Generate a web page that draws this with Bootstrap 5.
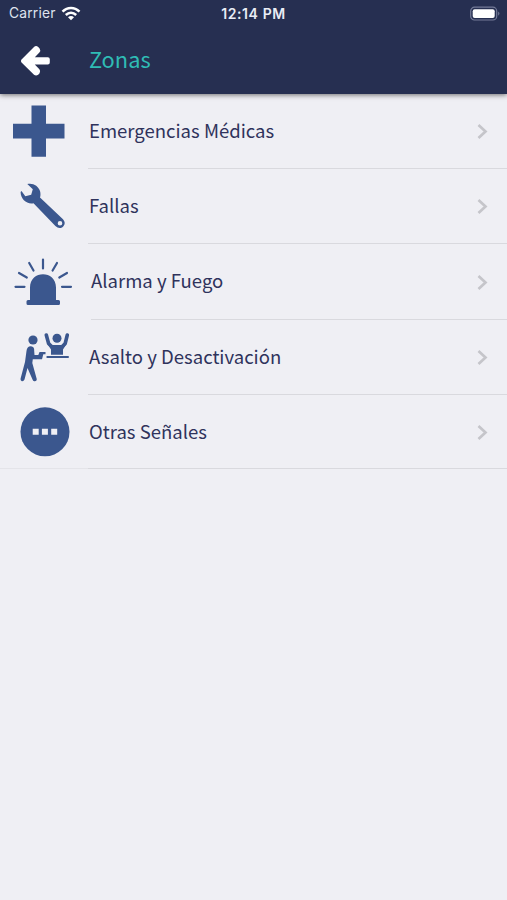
<!DOCTYPE html>
<html lang="es">
<head>
<meta charset="utf-8">
<meta name="viewport" content="width=device-width, initial-scale=1">
<title>Zonas</title>
<link href="https://cdn.jsdelivr.net/npm/bootstrap@5.3.0/dist/css/bootstrap.min.css" rel="stylesheet">
<style>
body{background:#efeff4;font-family:"Noto Sans CJK SC","Noto Sans",sans-serif;color:#2f335c}
.app-header{background:#262f51;height:94px;box-shadow:0 1px 5px rgba(0,0,0,.55);z-index:2}
.status{height:27px;font-family:Inter,"Liberation Sans",sans-serif;font-size:13.8px;line-height:27px;color:#dfe3ef}
.status .side{flex:1 1 0}
.carrier{padding-left:9px;letter-spacing:.2px}
.wifi{margin-left:5px}
.clock{font-weight:600;font-size:14px;letter-spacing:.6px;color:#e9ecf5;padding-left:4px}
.title-bar{height:67px}
.back{width:89px;height:67px}
.title-bar h1{font-size:21.8px;line-height:64px;font-weight:400;color:#2fbcb5;padding-bottom:3px}
.zone{height:75px;color:inherit}
.zone.tall{height:76px}
.zone.last{height:74px;box-shadow:inset 0 -1px #e4e4e9}
.zone svg.pic{width:88px;height:75px;fill:#3b578e;stroke:#3b578e;stroke-width:0}
.zone .body-part{border-bottom:1px solid #d9d9de;padding-right:18px}
.zone.tall .body-part{margin-left:3px}
.label{font-size:18.55px;line-height:30px;white-space:nowrap;padding:0 0 3px 1px}
.zone.last .label{padding-bottom:2px}
.zone.tall .label{padding-left:0}
.chev{width:12px;height:18px;fill:none;stroke:#c5c5ca;stroke-width:2.7}
</style>
</head>
<body>
<header class="app-header position-relative">
  <div class="status d-flex">
    <div class="side d-flex align-items-center">
      <span class="carrier">Carrier</span>
      <svg class="wifi" width="20" height="16" viewBox="0 0 20 16" fill="none" stroke="#fff" stroke-width="2.5"><path d="M1.500 5.700C6.500 .7 13.500 .7 18.500 5.700M4.800 9C8 6 12 6 15.200 9"/><path d="M10 14.300L7 11.300C8.800 9.600 11.200 9.600 13 11.300Z" fill="#fff" stroke="none"/></svg>
    </div>
    <span class="clock">12:14 PM</span>
    <div class="side d-flex align-items-center justify-content-end pe-1">
      <svg width="33" height="16" viewBox="0 0 33 16"><rect x=".7" y="1.200" width="26" height="12.800" rx="3.800" fill="none" stroke="#747b98" stroke-width="1.200"/><rect x="2.700" y="3.200" width="22" height="8.800" rx="2" fill="#fff"/><path d="M28.300 5.500Q30.500 7.500 28.300 9.700Z" fill="#858ba5"/></svg>
    </div>
  </div>
  <div class="title-bar d-flex align-items-center">
    <svg class="back" viewBox="0 27 89 67" fill="#fff"><path d="M21.300 62.300Q20.600 61 21.300 59.700L34 46.900Q36 45.200 38.200 46.900L39.600 48.400Q41 50.500 39.400 52.500L34.800 57.200H47.800Q49.800 57.200 49.800 59.200V62.600Q49.800 64.600 47.800 64.600H34.800L39.400 69.200Q41 71.300 39.600 73.300L38.200 74.800Q36 76.400 34 74.800Z"/></svg>
    <h1 class="m-0">Zonas</h1>
  </div>
</header>

<main class="d-flex flex-column">
  <a class="zone d-flex text-decoration-none" href="#">
    <svg class="pic flex-shrink-0" viewBox="0 -1 88 75"><path d="M31.500 10.500H46V28.800H64.500V43.500H46V61.800H31.500V43.500H13V28.800H31.500Z"/></svg>
    <div class="body-part d-flex flex-grow-1 align-items-center justify-content-between"><span class="label">Emergencias Médicas</span><svg class="chev" viewBox="0 0 12 18"><path d="M1.500 3L8.500 9.500L1.500 16"/></svg></div>
  </a>
  <a class="zone d-flex text-decoration-none" href="#">
    <svg class="pic flex-shrink-0" viewBox="0 -1 88 75"><path fill-rule="evenodd" d="M27.300 14C33 12.600 38.500 16 40 21C40.700 23.500 40.600 26 40 27.500L63 49.200C65.300 51.700 65.300 54.300 63.200 56.400C61 58.500 58 58.500 55.400 56L33.500 33.200C27 34.500 20.700 29.500 20.600 22L21.500 21L25.300 26.300L31.200 24.800L32.800 19.300ZM60 50.900A2.300 2.300 0 1 0 60 55.500A2.300 2.300 0 1 0 60 50.900Z"/></svg>
    <div class="body-part d-flex flex-grow-1 align-items-center justify-content-between"><span class="label">Fallas</span><svg class="chev" viewBox="0 0 12 18"><path d="M1.500 3L8.500 9.500L1.500 16"/></svg></div>
  </a>
  <a class="zone tall d-flex text-decoration-none" href="#">
    <svg class="pic flex-shrink-0" viewBox="0 -1 88 75"><path d="M30 55V42.500C30 24.800 56 24.800 56 42.500V55H58.500Q60 55 60 56.500V58.500Q60 60 58.500 60H28Q26.500 60 26.500 58.500V56.500Q26.500 55 28 55Z"/><path fill="none" stroke-width="2.200" stroke-linecap="round" d="M15.500 41.800H24.500M19 28L26.800 32.500M29.200 18L33.500 25.500M43 14.500V23.500M57 18L52.600 25.500M67 28L59.300 32.500M62 41.800H71"/></svg>
    <div class="body-part d-flex flex-grow-1 align-items-center justify-content-between"><span class="label">Alarma y Fuego</span><svg class="chev" viewBox="0 0 12 18"><path d="M1.500 3L8.500 9.500L1.500 16"/></svg></div>
  </a>
  <a class="zone d-flex text-decoration-none" href="#">
    <svg class="pic flex-shrink-0" viewBox="0 0 88 75"><circle cx="33" cy="20" r="4.600"/><circle cx="57" cy="18.300" r="4.500"/><path d="M26.500 31Q27 26 31 26.200Q34.500 26.500 34.200 31L34.500 35H38.300L39.500 32H45.500V34.200H43.300L42 39.200H32.800L32.300 43L36.800 59.200Q36.700 61.700 34.300 61.300Q33 61 32.500 59.500L27.500 48L24.500 59.500Q23.500 61.700 21.500 61Q20.200 60.200 20.600 58.500L25 42Z"/><path fill="none" stroke-width="3.600" stroke-linecap="round" stroke-linejoin="round" d="M46.300 15L48.600 23.500L53 28M67.300 15L65.200 23.500L61 28"/><path d="M48 24.500L53 25H61L66 24.500L63 29.500V34.800H51V29.500ZM46.800 36H68.500Q69.500 37 68.500 38H46.800Q45.800 37 46.800 36Z"/></svg>
    <div class="body-part d-flex flex-grow-1 align-items-center justify-content-between"><span class="label">Asalto y Desactivación</span><svg class="chev" viewBox="0 0 12 18"><path d="M1.500 3L8.500 9.500L1.500 16"/></svg></div>
  </a>
  <a class="zone last d-flex text-decoration-none" href="#">
    <svg class="pic flex-shrink-0" viewBox="0 0 88 75"><circle cx="45" cy="36.800" r="24.500"/><path fill="#efeff4" d="M32.700 33.800h6v6h-6zM41.900 33.800h6v6h-6zM51.200 33.800h6v6h-6z"/></svg>
    <div class="body-part d-flex flex-grow-1 align-items-center justify-content-between"><span class="label">Otras Señales</span><svg class="chev" viewBox="0 0 12 18"><path d="M1.500 3L8.500 9.500L1.500 16"/></svg></div>
  </a>
</main>
<script src="https://cdn.jsdelivr.net/npm/bootstrap@5.3.0/dist/js/bootstrap.bundle.min.js"></script>
</body>
</html>
